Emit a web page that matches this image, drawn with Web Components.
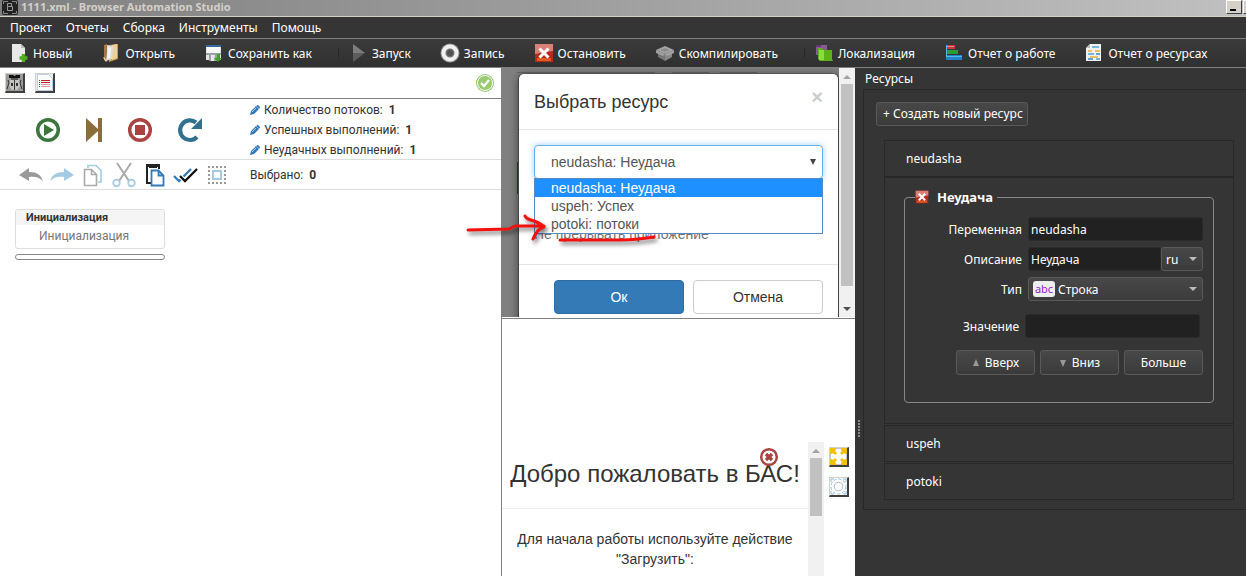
<!DOCTYPE html>
<html lang="ru">
<head>
<meta charset="utf-8">
<title>1111.xml - Browser Automation Studio</title>
<style>
body { margin: 0; background: #353535; font-family: "Noto Sans", "Open Sans", sans-serif; font-size: 12px; }
</style>
</head>
<body>
<bas-app></bas-app>
<script>
const define = (name, html) => {
  const t = document.createElement('template');
  t.innerHTML = '<style>*{box-sizing:border-box}button,input,select{font:inherit;color:inherit;margin:0}svg{display:block;flex:none}</style>' + html;
  customElements.define(name, class extends HTMLElement {
    constructor() {
      super();
      this.attachShadow({ mode: 'open' }).append(t.content.cloneNode(true));
    }
  });
};

/* ---------- window chrome ---------- */
define('bas-titlebar', `
<style>
:host { display: flex; align-items: center; height: 17px; padding-left: 2px; gap: 3px; overflow: hidden; position: relative;
  background: linear-gradient(90deg, #808080, #c0c0c0); border-bottom: 1px solid #d4d0c8; box-sizing: border-box;
  color: #d4d0c8; font: bold 11px/14px "Noto Sans", sans-serif; }
span { flex: 1; white-space: nowrap; margin-bottom: 2px; }
button { width: 16px; height: 14px; background: #d4d0c8; border: 1px solid; border-color: #fff #404040 #404040 #fff; padding: 0; margin: -3px -6px 0 0; display: block; }
button + button { margin: -3px -13px 0 4px; }
</style>
<svg width="16" height="16" viewBox="0 0 16 16"><rect width="16" height="15" rx="2" fill="#222"/><path d="M1.500 4V1.500H6M10 1.500h4.500V4M1.500 11v2.500H6M10 13.500h4.500V11" stroke="#888" fill="none"/><path d="M5.500 3.500h4v3h-4zM5.500 6.500h5v4h-5z" fill="none" stroke="#999"/></svg>
<span>1111.xml - Browser Automation Studio</span>
<button aria-label="Свернуть"><svg width="12" height="11"><path d="M3 8h6v2H3z"/></svg></button>
<button aria-label="Развернуть"></button>`);

define('bas-menubar', `
<style>
:host { display: block; background: #353535; border-bottom: 1px solid #808080; color: #fff; }
nav { display: flex; height: 21px; padding-left: 3px; }
button { border: 0; background: none; padding: 0 7px; white-space: nowrap; line-height: 20px; }
</style>
<nav><button>Проект</button><button>Отчеты</button><button>Сборка</button><button>Инструменты</button><button>Помощь</button></nav>`);

define('tool-item', `
<style>
:host { display: block; flex: none; }
button { display: flex; align-items: center; gap: 4px; border: 0; padding: 0; background: none; white-space: nowrap; height: 28px; color: #fff; }
</style>
<button><slot name="icon"></slot><span><slot></slot></span></button>`);

const redCross = s => `<svg slot="icon" width="${s}" height="${s}" viewBox="0 0 20 20"><path fill="#b5281c" d="M1 1h18v18H1z"/><path fill="#d98078" d="M1 1h18v7L1 11z"/><path fill="#e25a22" d="M3 15h14v3H3z"/><path d="M5.500 5.500l9 9m0-9l-9 9" stroke="#fff" stroke-width="3"/></svg>`;

define('bas-toolbar', `
<style>
:host { display: block; background: linear-gradient(#3b3b3b, #303030); border-bottom: 1px solid #808080; }
div { display: flex; gap: 29px; height: 28px; padding-left: 9px; overflow: hidden; }
.sep { margin-left: 7px; position: relative; }
.sep::before { content: ""; position: absolute; left: -10px; top: 9px; height: 10px; border-left: 1px solid #282828; }
</style>
<div role="toolbar">
<tool-item><svg slot="icon" width="20" height="20" viewBox="0 0 20 20"><path fill="#e8e8e8" d="M3 1h9l4 4v14H3z"/><path fill="#bbb" d="M12 1v4h4z"/><path d="M14.500 11v8M10.500 15h8" stroke="#4fae1d" stroke-width="3.500"/></svg>Новый</tool-item>
<tool-item><svg slot="icon" width="20" height="20" viewBox="0 0 20 20"><path fill="#c79a56" d="M8 2l9-1v15l-9 3z"/><path fill="#f0cf96" d="M11 2l5-1v14l-5 2z"/><path fill="#dcdcdc" d="M6 2l6 1-1 13-6 2z"/><path fill="#f4f4f4" d="M7 4l3 1-1 10-3 1z"/><path fill="#a67a3c" d="M3 2l3-1v2L5 17l-2-1z"/><path fill="#f6deb2" d="M2 14l2 1 2 4-2-1z"/></svg>Открыть</tool-item>
<tool-item><svg slot="icon" width="20" height="20" viewBox="0 0 20 20"><path fill="#dfe3e8" d="M2 2h15v15H2z"/><path fill="#39699c" d="M2 2h15v2H2z"/><path fill="#f7f7f7" d="M3 4h13v6H3z"/><path fill="#9a9fa8" d="M2 10h15v2H2zM5 12h9v6H5z"/><path fill="#e9e9e9" d="M7 12h4l-1 6H7z"/><path fill="#3fa226" d="M13 11h3v4h2l-4 4-4-4h3z"/></svg>Сохранить как</tool-item>
<tool-item class="sep"><svg slot="icon" width="20" height="20" viewBox="0 0 20 20"><path fill="#7d7d7d" d="M5 1l12 9H5z"/><path fill="#5c5c5c" d="M5 10h12L5 19z"/></svg>Запуск</tool-item>
<tool-item><svg slot="icon" width="20" height="20" viewBox="0 0 20 20"><circle cx="10" cy="10" r="9.500" fill="#999"/><circle cx="10" cy="10" r="6.500" fill="#707070" stroke="#f0f0f0" stroke-width="4"/><circle cx="10" cy="10" r="3" fill="#505050"/></svg>Запись</tool-item>
<tool-item>${redCross(20)}Остановить</tool-item>
<tool-item><svg slot="icon" width="20" height="20" viewBox="0 0 20 20"><path fill="#a5a5a5" d="M1 7l9-4 9 4-9 4z"/><path fill="#757575" d="M3 8l7 3v7l-7-4z"/><path fill="#8a8a8a" d="M17 8l-7 3v7l7-4z"/><path fill="#a0a0a0" d="M1 7l9 4-2 2-7-3zM19 7l-9 4 2 2 7-3z"/><path fill="#8c8c8c" d="M5 7l5-2 5 2-5 2z"/></svg>Скомпилировать</tool-item>
<tool-item class="sep"><svg slot="icon" width="20" height="20" viewBox="0 0 20 20"><path fill="#8a5a96" d="M2 2h11v10H2z"/><path fill="#5f3c6b" d="M2 2h5v2H2z"/><path fill="#5db21a" d="M4 5h4l1 2h9v9l1 2H6l-2-2z"/><path fill="#8ade3c" d="M5 7h5v10H5z"/></svg>Локализация</tool-item>
<tool-item><svg slot="icon" width="20" height="20" viewBox="0 0 20 20"><path fill="#c9353c" d="M2 2h9v4H2z"/><path fill="#e88" d="M3 3h7v1H3z"/><path fill="#2d9a3b" d="M2 7h12v4H2z"/><path fill="#1f84c9" d="M2 12h16v5H2z"/><path fill="#56b9ee" d="M2 2h1v11h15v1H2z"/></svg>Отчет о работе</tool-item>
<tool-item><svg slot="icon" width="20" height="20" viewBox="0 0 20 20"><path fill="#f0f0f0" d="M6 1h11v17H2V5z"/><path fill="#bbb" d="M6 1v4H2z"/><path d="M8 4h7M4 11h6M12 16h4" stroke="#4aa3d8" stroke-width="1.500"/><path d="M4 8h4M11 8h5M6 14h8" stroke="#e8b130" stroke-width="1.500"/><path d="M12 11h4M4 16h5" stroke="#3c82c8" stroke-width="1.500"/></svg>Отчет о ресурсах</tool-item>
</div>`);

/* ---------- script editor ---------- */
define('counter-line', `
<style>
:host { display: flex; align-items: center; gap: 4px; height: 20px; white-space: nowrap; }
</style>
<svg width="10" height="10" viewBox="0 0 10 10"><path fill="#337ab7" d="M0 10l1-4 5-5 3 3-5 5zM7 0h1l2 2v1l-1 .5L6.500 1z"/><path d="M2 7l4-4" stroke="#b5d3ec"/></svg>
<span><slot></slot></span>`);

define('script-panel', `
<style>
:host { display: block; background: #fff; color: #333; font: 12px/20px Roboto, sans-serif; min-width: 0; }
button { padding: 0; border: 0; background: none; display: block; }
.top { display: flex; gap: 10px; height: 31px; padding: 5px 7px 0 5px; border-bottom: 1px solid #808080; align-items: flex-start; }
.top .ok { margin-left: auto; }
.raised { border: 1px solid; border-color: #d4d0c8 #404040 #404040 #d4d0c8; border-right-width: 2px; border-bottom-width: 2px; width: 20px; height: 20px; background: #eee; }
.row { display: flex; align-items: center; border-bottom: 1px solid #ddd; }
.run { height: 61px; padding-top: 2px; }
.run .icons { display: flex; gap: 23px; width: 250px; padding-left: 35px; flex: none; }
.run .icons svg { overflow: visible; }
.edit { height: 30px; }
.edit .icons { display: flex; gap: 5px; width: 250px; padding-left: 18px; flex: none; }
.block { width: 150px; border: 1px solid #ddd; border-radius: 3px; margin: 19px 0 0 15px; overflow: hidden; }
.block h2 { margin: 0; background: #f5f5f5; font: bold 11px/15px Roboto, sans-serif; padding-left: 10px; }
.block p { margin: 0; color: #777; font-size: 12px; line-height: 23px; padding-left: 23px; }
.slot { width: 150px; height: 6px; border: 1px solid #888; border-radius: 3px; margin: 5px 0 0 15px; }
</style>
<div class="top">
<button class="raised" aria-label="Отладка"><svg width="17" height="17" viewBox="0 0 17 17"><path fill="#9a9a9a" d="M0 0h17v17H0z"/><path fill="#111" d="M3 1h4l1 1h1l1-1h4v3H3z"/><path fill="#555" d="M5 4h7v2H5z"/><path fill="#c4c4c4" d="M4 6h4v10H6L3 12zM13 6H9v10h2l3-4z"/><path d="M8.500 6v10M2 6l1 3-2 6M15 6l-1 3 2 6" stroke="#333" fill="none"/><path fill="#333" d="M5 9h2v3H5zM10 9h2v3h-2z"/></svg></button>
<button class="raised" aria-label="Журнал"><svg width="17" height="17" viewBox="0 0 17 17"><path fill="#fdfdfd" stroke="#b8d0e8" d="M1.500.5h11l4 4v12h-15z"/><path d="M5 6.500h9M5 8.500h9" stroke="#b22"/><path d="M5 10.500h9M5 12.500h9" stroke="#d99"/><path d="M3 6.500h1M3 8.500h1M3 10.500h1M3 12.500h1" stroke="#644"/></svg></button>
<svg class="ok" width="18" height="20" viewBox="0 0 18 20"><circle cx="9" cy="10" r="9" fill="#98cb72"/><circle cx="9" cy="10" r="7.500" fill="none" stroke="#fff"/><path d="M5 10l3 3 5-6" stroke="#fff" stroke-width="2.200" fill="none"/></svg>
</div>
<div class="row run">
<div class="icons">
<button aria-label="Играть"><svg width="26" height="26" viewBox="0 0 26 26"><circle cx="13" cy="13" r="10.300" fill="none" stroke="#3c763d" stroke-width="3.500"/><path fill="#3c763d" d="M9 7l10 6-10 6z"/></svg></button>
<button aria-label="Шаг"><svg width="20" height="26" viewBox="0 0 20 26"><path fill="#8a6d3b" d="M2 1l12 11V1h4v24h-4V14L2 25z"/></svg></button>
<button aria-label="Стоп"><svg width="26" height="26" viewBox="0 0 26 26"><circle cx="13" cy="13" r="10.300" fill="none" stroke="#a94442" stroke-width="3.500"/><path fill="#a94442" d="M8 8h10v10H8z"/></svg></button>
<button aria-label="Перезапуск"><svg width="28" height="26" viewBox="-1 0 28 26"><path d="M19 5.500A9.800 9.800 0 1 0 20 20" fill="none" stroke="#31708f" stroke-width="4.200"/><path fill="#31708f" d="M25 1v11H14z"/></svg></button>
</div>
<div>
<counter-line>Количество потоков: &nbsp;<b>1</b></counter-line>
<counter-line>Успешных выполнений: &nbsp;<b>1</b></counter-line>
<counter-line>Неудачных выполнений: &nbsp;<b>1</b></counter-line>
</div>
</div>
<div class="row edit">
<div class="icons">
<button aria-label="Отменить"><svg width="26" height="26" viewBox="0 0 26 26"><path fill="#999" d="M1 13l10-7v4c8 0 12 3 14 9-4-4-8-5-14-4v4z"/></svg></button>
<button aria-label="Повторить"><svg width="26" height="26" viewBox="0 0 26 26"><path fill="#a5cbe3" d="M25 13L15 6v4C7 10 3 13 1 19c4-4 8-5 14-4v4z"/></svg></button>
<button aria-label="Копировать"><svg width="26" height="26" viewBox="0 0 26 26"><path d="M8 6V3.500h8l5 5V20h-3" fill="none" stroke="#a5cbe3" stroke-width="1.600"/><path d="M4.500 7.500h7l5 5v11h-12zM11.500 7.500v5h5" fill="#fff" stroke="#aaa" stroke-width="1.600"/></svg></button>
<button aria-label="Вырезать"><svg width="26" height="26" viewBox="0 0 26 26"><path d="M6 1l12 18M20 1L8 19" stroke="#aaa" stroke-width="2" fill="none"/><circle cx="5.500" cy="21" r="3.300" stroke="#a5cbe3" stroke-width="1.700" fill="none"/><circle cx="20.500" cy="21" r="3.300" stroke="#a5cbe3" stroke-width="1.700" fill="none"/></svg></button>
<button aria-label="Вставить"><svg width="26" height="26" viewBox="0 0 26 26"><path fill="#222" d="M4 2h14v5h-2V5H6v15h3v2H4z"/><path fill="#222" d="M7 2h8v4H7z"/><path d="M9.500 8.500h7l5 5v10h-12zM16.500 8.500v5h5" fill="#fff" stroke="#337ab7" stroke-width="1.800"/></svg></button>
<button aria-label="Выделить все"><svg width="26" height="26" viewBox="0 0 26 26"><path d="M1 14l5 5L18 7" stroke="#337ab7" stroke-width="2.300" fill="none"/><path d="M7 14l5 5L24 7" stroke="#fff" stroke-width="4.500" fill="none"/><path d="M7 14l5 5L24 7" stroke="#111" stroke-width="2.300" fill="none"/></svg></button>
<button aria-label="Выделение"><svg width="26" height="26" viewBox="0 0 26 26"><rect x="5" y="5" width="16" height="16" fill="none" stroke="#999" stroke-width="2" stroke-dasharray="2 2" stroke-dashoffset="1"/><rect x="9" y="9" width="8" height="8" fill="none" stroke="#a5cbe3" stroke-width="2"/></svg></button>
</div>
<div>Выбрано: &nbsp;<b>0</b></div>
</div>
<div class="block"><h2>Инициализация</h2><p>Инициализация</p></div>
<div class="slot"></div>`);

/* ---------- dialog ---------- */
define('scroll-strip', `
<style>
:host { display: flex; flex-direction: column; background: #f1f1f1; flex: none; width: 16px; align-items: center; }
i { width: 12px; background: #c1c1c1; height: var(--thumb, 58px); }
svg.end { margin-top: auto; }
:host([open-end]) svg.end { display: none; }
</style>
<svg width="14" height="16"><path fill="#a3a3a3" d="M3 11l4-4 4 4z"/></svg><i></i>
<svg class="end" width="14" height="16"><path fill="#505050" d="M3 6h8l-4 4z"/></svg>`);

define('resource-dialog', `
<style>
:host { display: flex; height: 250px; background: #808080; overflow: hidden; font: 14px/20px "Liberation Sans", Arial, sans-serif; color: #333; border-bottom: 1px solid #fff; box-sizing: border-box; }
.stage { flex: 1; min-width: 0; padding: 5px 0 0 16px; background:
  linear-gradient(#666, #666) 15px 4px / 138px 1px no-repeat,
  linear-gradient(#666, #666) 170px 4px / 37px 1px no-repeat,
  linear-gradient(#666, #666) 218px 4px / 37px 1px no-repeat,
  linear-gradient(#1f4a20, #1f4a20) 15px 94px / 6px 32px no-repeat; }
.modal { background: #fff; border-left: 1px solid #444; border-right: 1px solid #444; border-top: 1px solid #555; border-radius: 6px 6px 0 0; height: 320px; box-shadow: 0 2px 8px rgba(0,0,0,.5); }
header { display: flex; justify-content: space-between; align-items: flex-start; padding: 15px; height: 56px; border-bottom: 1px solid #e5e5e5; }
h1 { margin: 0; font-size: 18px; line-height: 26px; font-weight: 400; }
header button { border: 0; background: none; padding: 0; color: #ccc; font-weight: bold; font-size: 20px; line-height: 16px; }
.body { padding: 15px; height: 135px; border-bottom: 1px solid #e5e5e5; }
.pick { position: relative; }
.pick select { display: block; width: 100%; height: 34px; border: 1px solid #66afe9; border-radius: 4px; background: #fff; appearance: none; padding: 0 16px; color: #555; box-shadow: 0 0 6px rgba(102,175,233,.6); outline: 0; }
.pick svg { position: absolute; right: 6px; top: 13px; }
ul { position: absolute; z-index: 1; left: 0; right: 0; top: 33px; margin: 0; padding: 0; list-style: none; background: #fff; border: 1px solid #5a8ac6; color: #555; }
li { padding-left: 16px; line-height: 18px; }
li[aria-selected] { background: #1e90ff; color: #fff; }
.hint { margin: 45px 0 0; color: #737373; }
footer { display: flex; gap: 9px; padding: 15px 15px 0 35px; }
footer button { flex: 1; height: 34px; border-radius: 4px; border: 1px solid #ccc; background: #fff; }
footer .ok { background: #337ab7; border-color: #2e6da4; color: #fff; }
scroll-strip { --thumb: 202px; }
</style>
<div class="stage"><div class="modal" role="dialog" aria-labelledby="t">
<header><h1 id="t">Выбрать ресурс</h1><button aria-label="Закрыть">×</button></header>
<div class="body">
<div class="pick"><select aria-label="Ресурс"><option>neudasha: Неудача</option><option>uspeh: Успех</option><option>potoki: потоки</option></select>
<svg width="8" height="8"><path fill="#444" d="M1 1h6L4 7z"/></svg>
<ul role="listbox" aria-label="Ресурс"><li role="option" aria-selected="true">neudasha: Неудача</li><li role="option">uspeh: Успех</li><li role="option">potoki: потоки</li></ul></div>
<p class="hint">Не прерывать приложение</p>
</div>
<footer><button class="ok">Ок</button><button>Отмена</button></footer>
</div></div>
<scroll-strip></scroll-strip>`);

define('welcome-pane', `
<style>
:host { display: flex; flex: 1; background: #fff; border-top: 1px solid #808080; padding-top: 123px; color: #333; font: 14px/20px "Liberation Sans", Arial, sans-serif; text-align: center; }
.text { flex: 1; min-width: 0; position: relative; min-height: 134px; }
h1 { margin: 0; font-size: 24px; font-weight: 400; line-height: 26px; padding: 19px 0 21px; border-bottom: 1px solid #eee; white-space: nowrap; }
p { margin: 0; padding: 20px 8px 0; }
.close { position: absolute; right: 29px; top: 5px; padding: 0; border: 0; background: none; }
.tools { display: flex; flex-direction: column; gap: 10px; padding: 5px 6px 0 5px; }
.tools button { width: 20px; height: 20px; padding: 0; background: #eee; border: 1px solid; border-color: #d4d0c8 #404040 #404040 #d4d0c8; border-right-width: 2px; border-bottom-width: 2px; }
</style>
<div class="text">
<h1>Добро пожаловать в БАС!</h1>
<button class="close" aria-label="Закрыть"><svg width="20" height="20" viewBox="0 0 20 20"><circle cx="10" cy="10" r="7.800" fill="none" stroke="#a94442" stroke-width="2.500"/><path d="M7 7l6 6m0-6l-6 6" stroke="#a94442" stroke-width="3.400"/></svg></button>
<p>Для начала работы используйте действие "Загрузить":</p>
</div>
<scroll-strip open-end></scroll-strip>
<div class="tools">
<button aria-label="Развернуть"><svg width="17" height="17" viewBox="0 0 17 17"><path fill="#fff" stroke="#b9c6d6" d="M.5.5h16v16H.5z"/><path fill="#f5c000" d="M0 0h6v2l-1 1 2 2-2 2-2-2-1 1H0zM17 0h-6v2l1 1-2 2 2 2 2-2 1 1h2zM0 17h6v-2l-1-1 2-2-2-2-2 2-1-1H0zM17 17h-6v-2l1-1-2-2 2-2 2 2 1-1h2z"/></svg></button>
<button aria-label="Настройки"><svg width="17" height="17" viewBox="0 0 17 17"><path fill="#fff" d="M0 0h17v17H0z"/><circle cx="8.500" cy="8.500" r="7.500" fill="none" stroke="#8cc0e2" stroke-dasharray="3 2"/><path d="M1 4V1h3M13 1h3v3M1 13v3h3M13 16h3v-3" fill="none" stroke="#8cc0e2"/><circle cx="8.500" cy="8.500" r="4.300" fill="none" stroke="#a9b7c4"/></svg></button>
</div>`);

define('middle-pane', `
<style>
:host { display: flex; flex-direction: column; border-left: 1px solid #808080; position: relative; min-width: 0; box-sizing: border-box; }
.mark { position: absolute; z-index: 2; left: -42px; top: 138px; pointer-events: none; filter: drop-shadow(2px 3px 2px rgba(0,0,0,.55)); overflow: visible; }
</style>
<resource-dialog></resource-dialog>
<welcome-pane></welcome-pane>
<svg class="mark" width="210" height="50" viewBox="460 206 210 50" fill="none" stroke="#f51010" stroke-width="3" stroke-linecap="round" stroke-linejoin="round"><path d="M468 230l41-1 6-3h29M525 216q1 3 9 5q8 3 10 6q-7 2-11 12"/><path d="M560 240h60q16 0 34-3"/></svg>`);

/* ---------- resources ---------- */
define('resource-form', `
<style>
:host { display: block; padding: 12px 19px 19px; }
fieldset { margin: 0; min-width: 0; border: 1px solid #888; border-radius: 4px; padding: 0 10px 27px; }
legend { display: flex; align-items: center; gap: 8px; padding: 0 4px 0 0; height: 14px; font: bold 13px/14px "Noto Sans", sans-serif; }
.line { display: grid; grid-template-columns: 107px 1fr; gap: 6px; height: 24px; margin-bottom: 6px; align-items: center; }
.first { margin-top: 13px; }
label { text-align: right; }
input { width: 100%; min-width: 0; height: 24px; border: 1px solid #2b2b2b; border-radius: 3px; background: #212121; padding: 0 2px; }
.box { position: relative; display: flex; min-width: 0; }
select { appearance: none; height: 24px; border: 1px solid #5a5a5a; border-radius: 3px; background: linear-gradient(#484848, #3b3b3b); padding: 0 4px; }
.lang { width: 42px; flex: none; }
.type { width: 100%; padding-left: 29px; }
.box svg { position: absolute; right: 6px; top: 9px; }
.tag { position: absolute; left: 5px; top: 4px; width: 22px; height: 16px; background: #eee; border-radius: 3px; color: #92c; font: 11px/16px "Noto Sans", sans-serif; text-align: center; }
.value { margin: 13px 3px 0 -3px; }
.buttons { display: flex; justify-content: flex-end; gap: 5px; margin-top: 12px; }
button { width: 79px; height: 25px; padding: 0; border: 1px solid #5a5a5a; border-radius: 3px; background: linear-gradient(#484848, #3b3b3b); display: flex; align-items: center; justify-content: center; gap: 5px; }
</style>
<fieldset><legend>${redCross(14)}<span>Неудача</span></legend>
<div class="line first"><label for="n">Переменная</label><input id="n" value="neudasha"></div>
<div class="line"><label for="d">Описание</label><div class="box"><input id="d" value="Неудача"><select class="lang" aria-label="Язык"><option>ru</option></select><svg width="8" height="6"><path fill="#bbb" d="M0 1h8L4 5z"/></svg></div></div>
<div class="line"><label for="k">Тип</label><div class="box"><select class="type" id="k"><option>Строка</option></select><span class="tag">abc</span><svg width="8" height="6"><path fill="#bbb" d="M0 1h8L4 5z"/></svg></div></div>
<div class="line value"><label for="v">Значение</label><input id="v"></div>
<div class="buttons"><button><svg width="8" height="8"><path fill="#999" d="M1 7h6L4 0z"/></svg>Вверх</button><button><svg width="8" height="8"><path fill="#999" d="M1 1h6L4 8z"/></svg>Вниз</button><button>Больше</button></div>
</fieldset>`);

define('resource-card', `
<style>
:host { display: block; border: 1px solid #282828; box-sizing: border-box; }
div { line-height: 35px; padding-left: 21px; }
</style>
<div><slot></slot></div>`);

define('resources-panel', `
<style>
:host { display: flex; background: #353535; color: #fff; min-width: 0; }
.grip { width: 8px; flex: none; padding: 352px 0 0 3px; }
.side { flex: 1; min-width: 0; }
h2 { margin: 0; font: 12px/21px "Noto Sans", sans-serif; padding-left: 2px; }
.frame { border: solid #282828; border-width: 1px 0 1px 1px; height: 421px; padding: 12px 12px 0 12px; }
.add { height: 24px; padding: 0 4px 0 6px; border: 1px solid #5a5a5a; border-radius: 3px; background: linear-gradient(#484848, #3b3b3b); white-space: nowrap; display: block; line-height: 20px; }
.list { padding: 14px 0 0 8px; }
.form { border: 1px solid #282828; height: 247px; }
.list resource-card + .form + resource-card { margin: 1px 0; }
</style>
<div class="grip"><svg width="2" height="17"><path d="M1 0v17" stroke="#888" stroke-width="2" stroke-dasharray="2 1"/></svg></div>
<div class="side"><h2>Ресурсы</h2>
<div class="frame"><button class="add">+ Создать новый ресурс</button>
<div class="list"><resource-card>neudasha</resource-card><div class="form"><resource-form></resource-form></div><resource-card>uspeh</resource-card><resource-card>potoki</resource-card></div>
</div></div>`);

define('bas-app', `
<style>
:host { display: flex; flex-direction: column; min-height: 100vh; overflow: hidden; }
main { flex: 1; display: grid; grid-template-columns: minmax(0, 501fr) minmax(0, 354fr) minmax(0, 391fr); }
</style>
<bas-titlebar></bas-titlebar><bas-menubar></bas-menubar><bas-toolbar></bas-toolbar>
<main><script-panel></script-panel><middle-pane></middle-pane><resources-panel></resources-panel></main>`);
</script>
</body>
</html>
